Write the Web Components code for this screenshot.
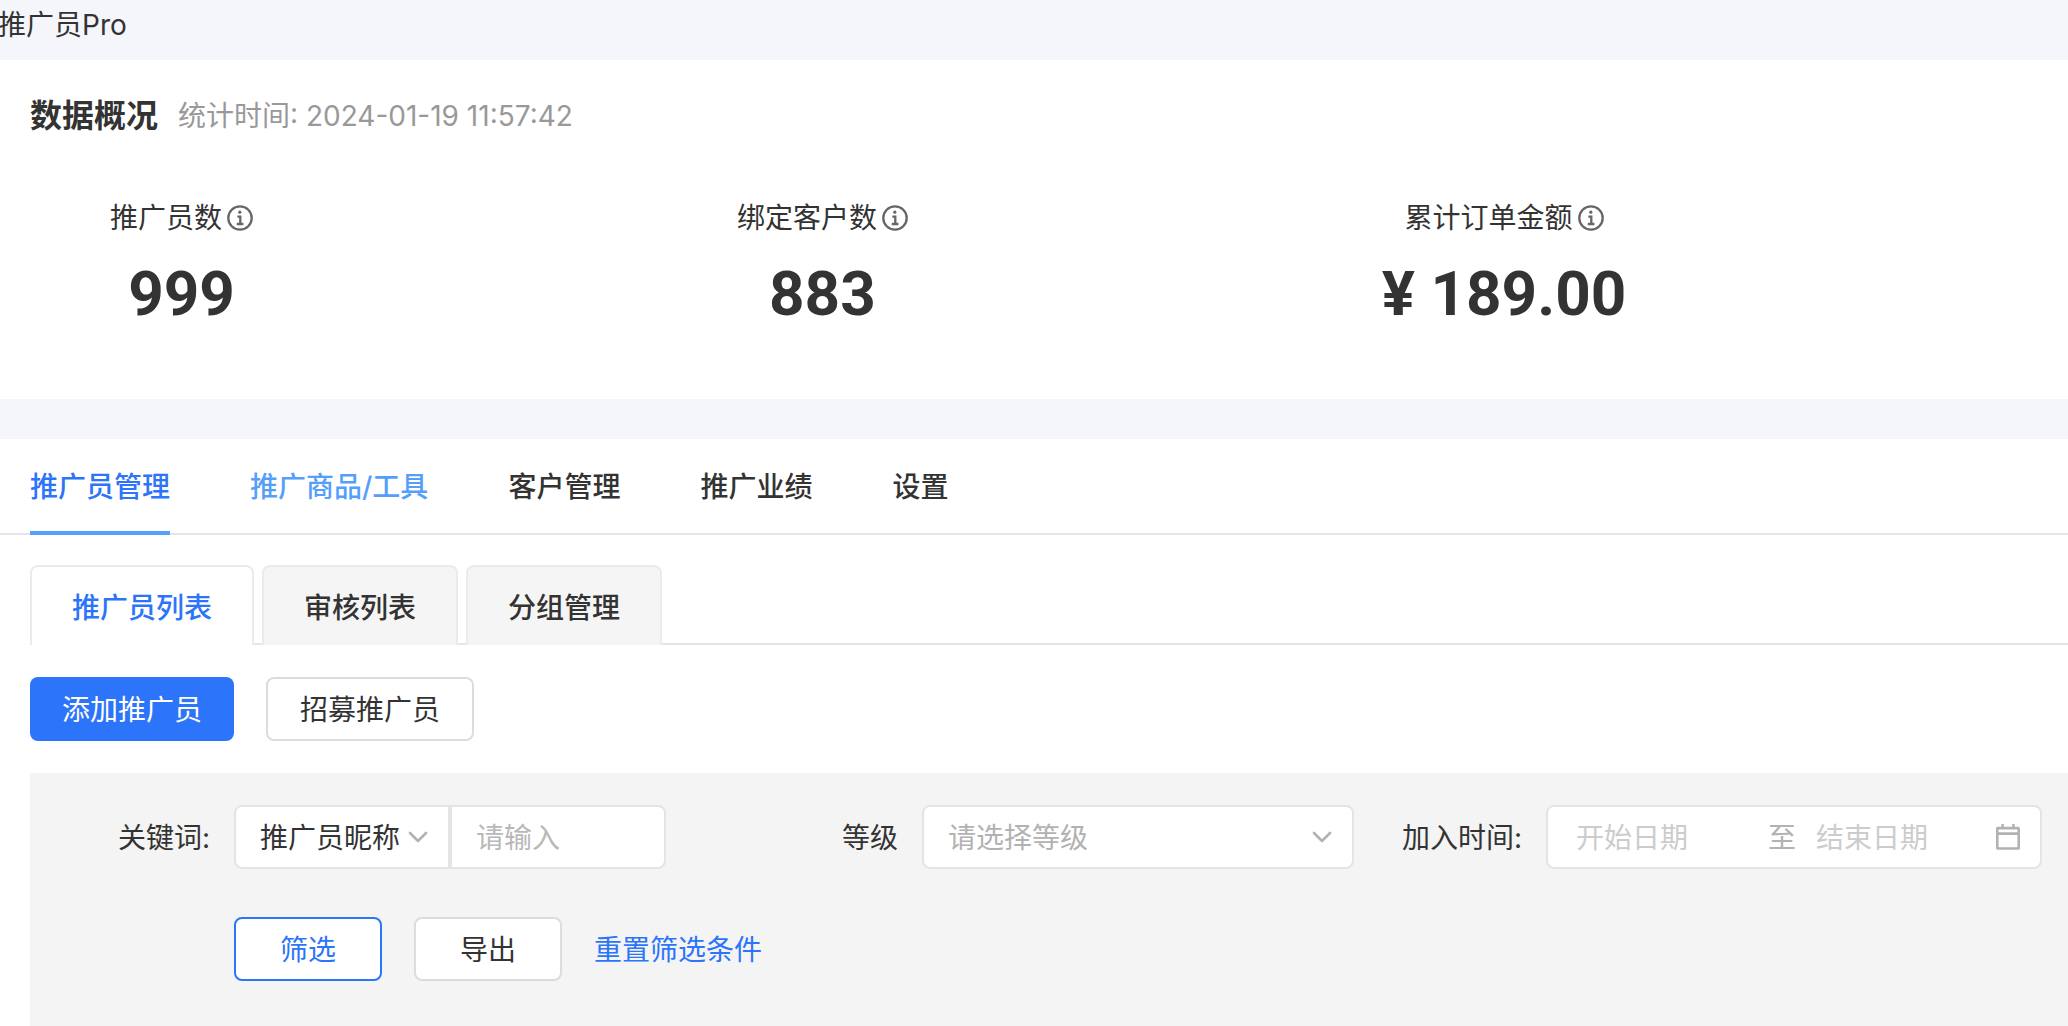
<!DOCTYPE html>
<html lang="zh-CN">
<head>
<meta charset="utf-8">
<title>推广员Pro</title>
<style>
  body {
    margin: 0;
    background: #f5f6fb;
    color: #333;
    font-family: Inter, "Noto Sans CJK SC", sans-serif;
    font-size: 28px;
    line-height: 40px;
  }
</style>
</head>
<body>
<promoter-app></promoter-app>
<script>
const define = (name, html) => {
  const template = document.createElement('template');
  template.innerHTML = html;
  customElements.define(name, class extends HTMLElement {
    constructor() {
      super();
      this.attachShadow({ mode: 'open' }).append(template.content.cloneNode(true));
    }
  });
};

define('info-icon', `
  <style>
    :host { display: block; width: 26px; height: 26px; color: #666; }
    svg { display: block; }
  </style>
  <svg width="26" height="26" viewBox="0 0 26 26" fill="none" stroke="currentColor" stroke-width="2.3" aria-hidden="true">
    <circle cx="13" cy="13" r="11.7"/>
    <circle cx="12.8" cy="7.2" r="1.6" fill="currentColor" stroke="none"/>
    <path d="M10.4 11.6h2.9v7.2M9.8 19h6.6"/>
  </svg>`);

define('chevron-icon', `
  <style>
    :host { display: block; width: 20px; height: 12px; color: #b2b2b2; pointer-events: none; }
    svg { display: block; }
  </style>
  <svg width="20" height="12" viewBox="0 0 20 12" fill="none" stroke="currentColor" stroke-width="2.6" stroke-linecap="round" stroke-linejoin="round" aria-hidden="true">
    <path d="M2 2l8 8 8-8"/>
  </svg>`);

define('calendar-icon', `
  <style>
    :host { display: block; width: 24px; height: 26px; color: #b2b2b2; }
    svg { display: block; }
  </style>
  <svg width="24" height="26" viewBox="0 0 24 26" fill="none" stroke="currentColor" stroke-width="2.6" aria-hidden="true">
    <rect x="1.3" y="4.1" width="21.4" height="20.4" rx="0.6"/>
    <path d="M1 9.6h22M6.6 0v4M17.4 0v4"/>
  </svg>`);

define('page-title', `
  <style>
    :host { display: block; height: 60px; }
    h1 { margin: 0 0 0 -2px; padding-top: 5px; font-size: 28px; font-weight: 400; line-height: 40px; }
  </style>
  <h1><slot></slot></h1>`);

define('stat-item', `
  <style>
    :host { display: flex; flex-direction: column; align-items: center; gap: 22px; }
    .label { display: flex; align-items: center; gap: 5px; line-height: 44px; }
    .value { margin: 0 -10px; font: 700 62px/64px Roboto, sans-serif; white-space: nowrap; }
  </style>
  <div class="label"><slot name="label"></slot><info-icon></info-icon></div>
  <div class="value"><slot></slot></div>`);

define('data-overview', `
  <style>
    :host { display: block; padding: 36px 30px 73px; background: #fff; }
    header { display: flex; align-items: center; gap: 20px; margin-bottom: 60px; }
    h2 { margin: 0; font-size: 32px; font-weight: 700; line-height: 40px; }
    time { color: #999; }
    .stats { display: flex; justify-content: space-between; width: 79%; padding-left: 80px; box-sizing: border-box; }
  </style>
  <header><h2>数据概况</h2><time datetime="2024-01-19T11:57:42">统计时间: 2024-01-19 11:57:42</time></header>
  <div class="stats">
    <stat-item><span slot="label">推广员数</span>999</stat-item>
    <stat-item><span slot="label">绑定客户数</span>883</stat-item>
    <stat-item><span slot="label">累计订单金额</span>¥ 189.00</stat-item>
  </div>`);

define('main-tabs', `
  <style>
    :host { display: block; border-bottom: 2px solid #e4e5eb; }
    nav { display: flex; gap: 80px; padding: 0 30px; margin-bottom: -2px; }
    a { height: 92px; border-bottom: 4px solid transparent; color: #333; font-weight: 500; line-height: 96px; text-decoration: none; white-space: nowrap; }
    a.active { color: #2c74f9; border-color: #559ffb; }
    a.hover { color: #559ffb; }
  </style>
  <nav>
    <a href="#promoters" class="active">推广员管理</a>
    <a href="#goods" class="hover">推广商品/工具</a>
    <a href="#customers">客户管理</a>
    <a href="#performance">推广业绩</a>
    <a href="#settings">设置</a>
  </nav>`);

define('sub-tabs', `
  <style>
    :host { display: block; margin: 30px 0 0 30px; border-bottom: 2px solid #e4e5eb; }
    div { display: flex; gap: 8px; margin-bottom: -2px; }
    button { box-sizing: border-box; height: 80px; padding: 3px 40px 0; border: 2px solid #ebebed; border-bottom: 0; border-radius: 8px 8px 0 0; background: #f5f5f5; color: #333; font: inherit; font-weight: 500; white-space: nowrap; }
    button[aria-selected=true] { background: #fff; color: #2c74f9; }
  </style>
  <div role="tablist">
    <button role="tab" aria-selected="true">推广员列表</button>
    <button role="tab" aria-selected="false">审核列表</button>
    <button role="tab" aria-selected="false">分组管理</button>
  </div>`);

define('ui-button', `
  <style>
    :host { display: block; }
    button { box-sizing: border-box; height: 64px; min-width: 148px; padding: 2px 32px 0; border: 2px solid #dcdcdc; border-radius: 8px; background: #fff; color: #333; font: inherit; white-space: nowrap; }
    :host([kind=primary]) button { border: 0; background: #2c74f9; color: #fff; }
    :host([kind=outline]) button { border-color: #2c74f9; color: #2c74f9; }
  </style>
  <button type="button"><slot></slot></button>`);

const fieldStyle = `
  <style>
    :host { display: flex; align-items: center; gap: 24px; flex: 1 1 auto; }
    label { flex: none; min-width: var(--label-width, auto); padding-top: 2px; text-align: right; white-space: nowrap; }
    .control { display: flex; align-items: center; flex: 1 1 auto; box-sizing: border-box; width: 432px; height: 64px; border: 2px solid #e4e4e4; border-radius: 8px; background: #fff; overflow: hidden; }
    input, select { box-sizing: border-box; min-width: 0; height: 60px; margin: 0; border: 0; background: none; color: #333; font: inherit; outline: 0; }
    select { appearance: none; width: 100%; padding: 2px 36px 0 24px; }
    input { padding: 2px 24px 0; }
    input::placeholder { color: #b8b8b8; opacity: 1; }
    .pick { display: grid; align-items: center; box-sizing: border-box; flex: 1 1 50%; min-width: 0; }
    .pick > * { grid-area: 1 / 1; }
    .pick chevron-icon { justify-self: end; margin-right: 20px; }
  </style>`;

define('keyword-field', fieldStyle + `
  <style>
    .pick { flex-basis: calc(50% + 2px); border-right: 4px solid #e4e4e4; }
    input { flex: 1 1 calc(50% - 2px); }
  </style>
  <label for="word">关键词:</label>
  <div class="control">
    <div class="pick">
      <select aria-label="关键词"><option>推广员昵称</option></select>
      <chevron-icon></chevron-icon>
    </div>
    <input id="word" type="text" placeholder="请输入">
  </div>`);

define('level-field', fieldStyle + `
  <style>select { color: #b2b2b2; }</style>
  <label for="level">等级</label>
  <div class="control">
    <div class="pick">
      <select id="level"><option>请选择等级</option></select>
      <chevron-icon></chevron-icon>
    </div>
  </div>`);

define('date-field', fieldStyle + `
  <style>
    .control { width: 496px; padding: 0 20px 0 28px; }
    input { flex: 1 1 0; padding: 2px 0 0; }
    input::placeholder { color: #ccc; }
    .to { flex: none; margin: 0 20px 0 12px; padding-top: 2px; color: #b2b2b2; }
  </style>
  <label for="start">加入时间:</label>
  <div class="control">
    <input id="start" type="text" placeholder="开始日期">
    <span class="to">至</span>
    <input type="text" aria-label="结束日期" placeholder="结束日期">
    <calendar-icon></calendar-icon>
  </div>`);

define('filter-panel', `
  <style>
    :host { display: block; flex: 1; margin: 32px 0 0 30px; padding: 32px 26px 44px 0; background: #f4f4f4; }
    .fields { display: flex; gap: 48px; }
    keyword-field { --label-width: 180px; }
    level-field { --label-width: 184px; }
    .actions { display: flex; align-items: center; gap: 32px; margin: 48px 0 0 204px; }
    a { padding-top: 2px; color: #2c74f9; text-decoration: none; }
    @media (max-width: 1700px) { .fields { flex-wrap: wrap; } }
  </style>
  <div class="fields">
    <keyword-field></keyword-field>
    <level-field></level-field>
    <date-field></date-field>
  </div>
  <div class="actions">
    <ui-button kind="outline">筛选</ui-button>
    <ui-button>导出</ui-button>
    <a href="#reset">重置筛选条件</a>
  </div>`);

define('promoter-app', `
  <style>
    :host { display: flex; flex-direction: column; min-height: 100vh; }
    main { display: flex; flex-direction: column; flex: 1; margin-top: 40px; background: #fff; }
    .buttons { display: flex; gap: 32px; margin: 32px 0 0 30px; }
  </style>
  <page-title>推广员Pro</page-title>
  <data-overview></data-overview>
  <main>
    <main-tabs></main-tabs>
    <sub-tabs></sub-tabs>
    <div class="buttons">
      <ui-button kind="primary">添加推广员</ui-button>
      <ui-button>招募推广员</ui-button>
    </div>
    <filter-panel></filter-panel>
  </main>`);
</script>
</body>
</html>
